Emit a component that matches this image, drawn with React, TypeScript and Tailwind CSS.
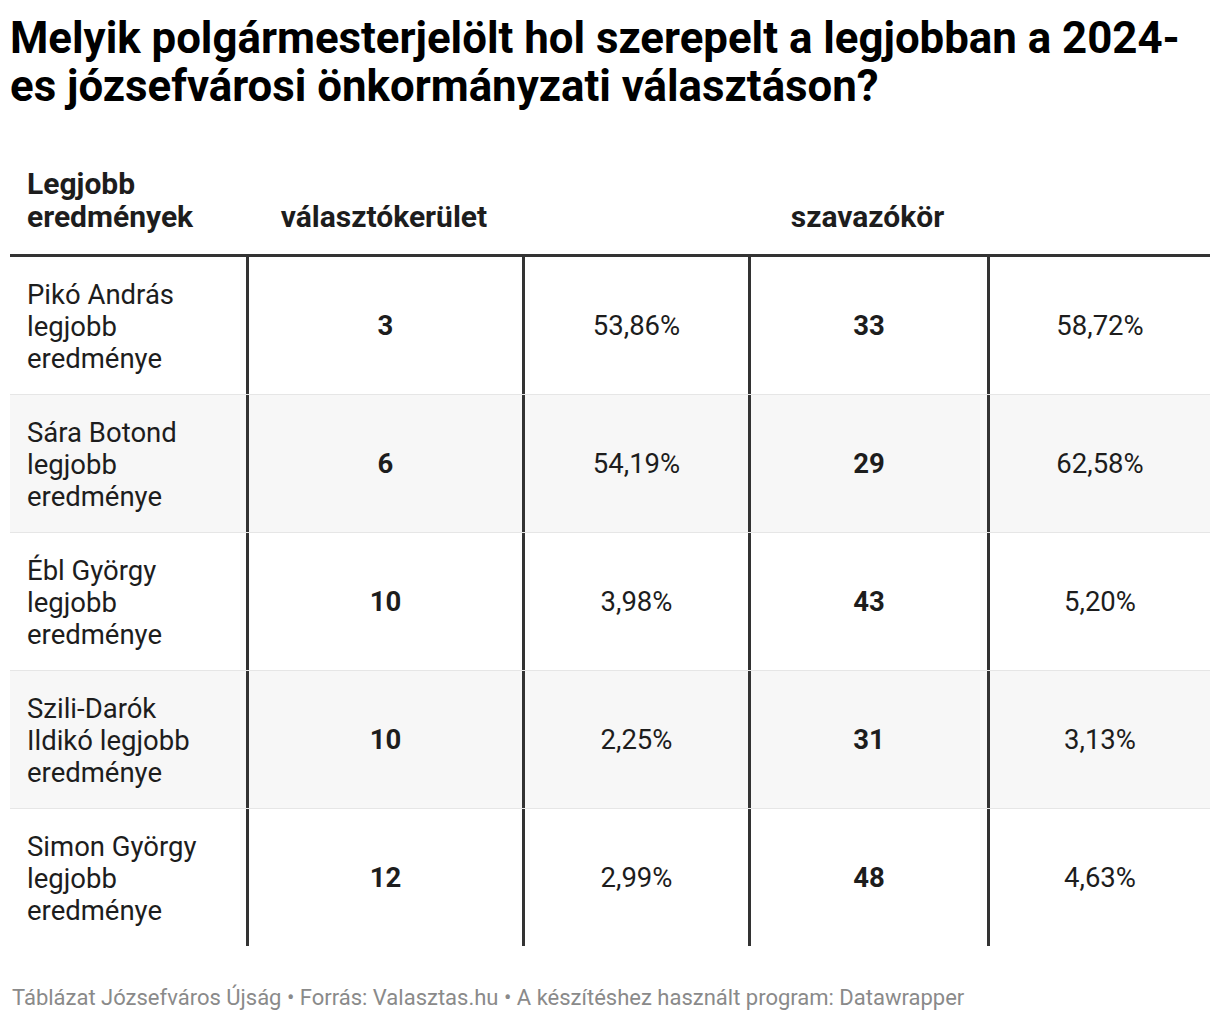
const rows = [
  { name: "Pikó András legjobb eredménye", vk: "3", vkPct: "53,86%", szk: "33", szkPct: "58,72%" },
  { name: "Sára Botond legjobb eredménye", vk: "6", vkPct: "54,19%", szk: "29", szkPct: "62,58%" },
  { name: "Ébl György legjobb eredménye", vk: "10", vkPct: "3,98%", szk: "43", szkPct: "5,20%" },
  { name: "Szili-Darók Ildikó legjobb eredménye", vk: "10", vkPct: "2,25%", szk: "31", szkPct: "3,13%" },
  { name: "Simon György legjobb eredménye", vk: "12", vkPct: "2,99%", szk: "48", szkPct: "4,63%" },
];

const cols = "grid grid-cols-[236px_276px_226px_239px_223px]";

export default function App() {
  return (
    <div className="w-[1220px] min-h-[1022px] bg-white px-[10px] pt-[14px] font-['Roboto',sans-serif] text-[#1d1d1d]">
      <h1 className="text-[43.8px] leading-[48px] font-bold text-black">
        Melyik polgármesterjelölt hol szerepelt a legjobban a 2024-es józsefvárosi önkormányzati választáson?
      </h1>

      <div className="mt-[57px] w-[1200px]">
        <div className={`${cols} border-b-[3px] border-[#333] text-[30px] leading-[33px] font-bold`}>
          <div className="pl-[17px] pb-[21px]">
            Legjobb
            <br />
            eredmények
          </div>
          <div className="flex items-end justify-center pb-[21px]">választókerület</div>
          <div />
          <div className="flex items-end justify-center pb-[21px]">szavazókör</div>
          <div />
        </div>

        {rows.map((r, i) => (
          <div
            key={r.name}
            className={`${cols} text-[27.5px] leading-[32px] ${i % 2 === 1 ? "bg-[#f7f7f7]" : "bg-white"} ${i < rows.length - 1 ? "border-b border-[#e6e6e6]" : ""}`}
          >
            <div className="pl-[17px] pr-[40px] pt-[22px] pb-[19px]">{r.name}</div>
            <div className="border-l-[3px] border-[#333] flex items-center justify-center font-bold">{r.vk}</div>
            <div className="border-l-[3px] border-[#333] flex items-center justify-center">{r.vkPct}</div>
            <div className="border-l-[3px] border-[#333] flex items-center justify-center font-bold">{r.szk}</div>
            <div className="border-l-[3px] border-[#333] flex items-center justify-center">{r.szkPct}</div>
          </div>
        ))}
      </div>

      <p className="mt-[39px] pl-[2px] text-[22px] leading-[26px] text-[#8a8a8a]">
        Táblázat Józsefváros Újság • Forrás: Valasztas.hu • A készítéshez használt program: Datawrapper
      </p>
    </div>
  );
}
